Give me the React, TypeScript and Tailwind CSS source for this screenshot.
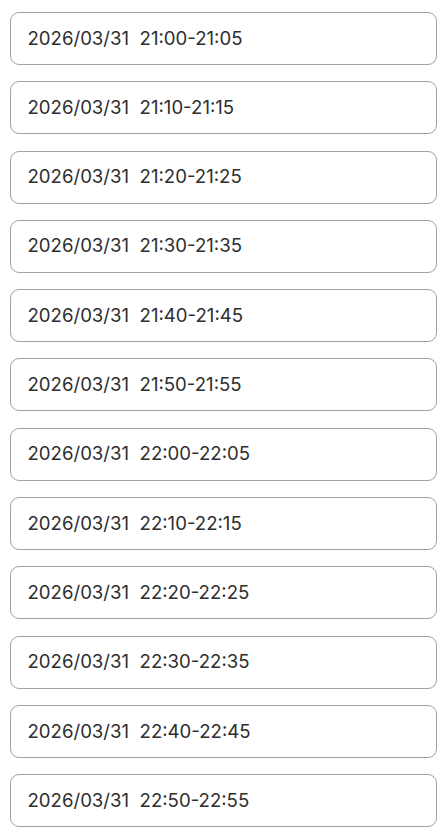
import React from "react";

const slots = [
  "21:00-21:05",
  "21:10-21:15",
  "21:20-21:25",
  "21:30-21:35",
  "21:40-21:45",
  "21:50-21:55",
  "22:00-22:05",
  "22:10-22:15",
  "22:20-22:25",
  "22:30-22:35",
  "22:40-22:45",
  "22:50-22:55",
];

export default function App() {
  return (
    <div
      className="min-h-[838px] w-[442px] bg-white pt-[12px] pl-[10px] pr-[5px] flex flex-col gap-[16.3px]"
      style={{ fontFamily: "Inter, 'Noto Sans', sans-serif" }}
    >
      {slots.map((s) => (
        <div
          key={s}
          className="h-[53px] w-[427px] rounded-[9px] border border-[#a3a3a3] flex items-center pl-[16.5px] text-[18.6px] text-[#2e2e2e] whitespace-pre"
        >
          {"2026/03/31  " + s}
        </div>
      ))}
    </div>
  );
}
